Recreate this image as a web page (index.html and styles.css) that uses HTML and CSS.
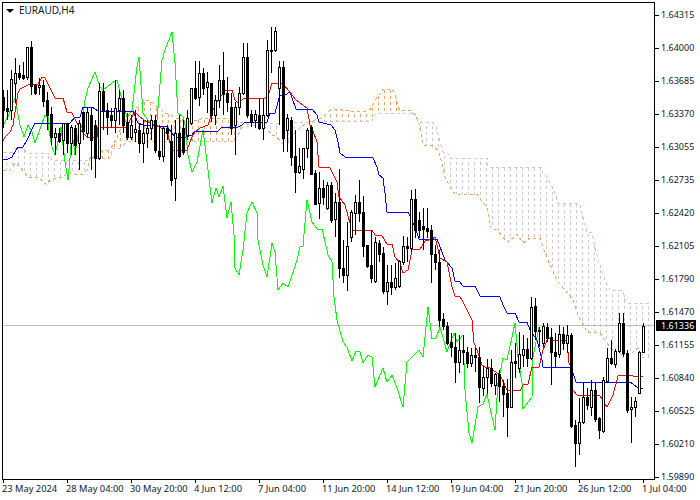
FILE: index.html
```html
<!DOCTYPE html>
<html lang="en">
  <head>
    <meta charset="UTF-8" />
    <title>EURAUD,H4</title>
    <link rel="stylesheet" href="styles.css">
  </head>
  <body>
    <div class="terminal">
      <div class="chart-row">
        <div class="plot">
          <svg id="chart" class="chart-svg" viewBox="3 3 651 476" width="651" height="476"></svg>
          <div class="symbol">
            <svg class="symbol-arrow" viewBox="0 0 8 4" width="8" height="4"><path d="M0 0H8L4 4Z" /></svg>
            <span>EURAUD,H4</span>
          </div>
        </div>
        <div class="price-axis">
          <div class="price">1.64315</div>
          <div class="price">1.64000</div>
          <div class="price">1.63685</div>
          <div class="price">1.63370</div>
          <div class="price">1.63055</div>
          <div class="price">1.62735</div>
          <div class="price">1.62420</div>
          <div class="price">1.62105</div>
          <div class="price">1.61790</div>
          <div class="price">1.61470</div>
          <div class="price">1.61155</div>
          <div class="price">1.60840</div>
          <div class="price">1.60525</div>
          <div class="price">1.60210</div>
          <div class="price">1.59890</div>
          <div class="price-tag">1.61336</div>
        </div>
      </div>
      <div class="time-axis">
        <div class="time">23 May 2024</div>
        <div class="time">28 May 04:00</div>
        <div class="time">30 May 20:00</div>
        <div class="time">4 Jun 12:00</div>
        <div class="time">7 Jun 04:00</div>
        <div class="time">11 Jun 20:00</div>
        <div class="time">14 Jun 12:00</div>
        <div class="time">19 Jun 04:00</div>
        <div class="time">21 Jun 20:00</div>
        <div class="time">26 Jun 12:00</div>
        <div class="time">1 Jul 04:00</div>
      </div>
    </div>
    <script src="chart.js"></script>
  </body>
</html>
```

FILE: styles.css
```css
* {
  margin: 0;
  padding: 0;
  box-sizing: border-box;
}

body,
html {
  width: 100%;
  height: 100%;
  overflow: hidden;
  background-color: white;
  color: #10202c;
  font-family: "Noto Sans", "Liberation Sans", sans-serif;
  font-size: 9px;
}

.terminal {
  width: 700px;
  height: 500px;
  padding: 2px 0 0 2px;
}

.chart-row {
  display: flex;
  height: 478px;
}

.plot {
  position: relative;
  flex: none;
  width: 653px;
  height: 478px;
  border: 1px solid black;
}

.chart-svg {
  display: block;
}

.symbol {
  position: absolute;
  top: 1px;
  left: 3px;
  display: flex;
  align-items: center;
  gap: 5px;
  font-size: 10px;
  line-height: 13px;
}

.symbol-arrow {
  fill: black;
}

/* price scale */
.price-axis {
  position: relative;
  flex: none;
  height: 478px;
  display: flex;
  flex-direction: column;
  gap: 21px;
  padding-top: 7px;
}

.price {
  position: relative;
  height: 12px;
  line-height: 12px;
  padding-left: 6px;
}

.price::before {
  content: "";
  position: absolute;
  top: 6px;
  left: 0;
  width: 4px;
  height: 1px;
  background-color: black;
}

.price-tag {
  position: absolute;
  top: 318px;
  left: 1px;
  width: 40px;
  height: 11px;
  line-height: 11px;
  padding-left: 5px;
  background-color: black;
  color: white;
}

/* time scale */
.time-axis {
  display: flex;
  height: 20px;
}

.time {
  position: relative;
  flex: none;
  width: 64px;
  height: 14px;
  padding-top: 3px;
  line-height: 11px;
  white-space: nowrap;
  font-size: 9.3px;
}

.time::before {
  content: "";
  position: absolute;
  top: 0;
  left: 1px;
  width: 1px;
  height: 3px;
  background-color: black;
}

/* chart drawing */
.chart-svg line,
.chart-svg polyline,
.chart-svg rect {
  shape-rendering: crispEdges;
}

.chart-svg polyline {
  fill: none;
  stroke-width: 1;
}

.bid-line {
  stroke: #c0c0c0;
}

.tenkan {
  stroke: #ff0000;
}

.kijun {
  stroke: #0000ff;
}

.chikou {
  stroke: #00ff00;
}

.senkou-a,
.senkou-b {
  stroke-dasharray: 3 3;
}

.senkou-a,
.hatch-a {
  stroke: #f4a460;
}

.senkou-b {
  stroke: #d8bfd8;
}

.hatch-b {
  stroke: #d2c4d2;
}

.hatch-a,
.hatch-b {
  stroke-dasharray: 3 3;
}

.wick {
  stroke: black;
}

.body-up {
  fill: white;
  stroke: black;
}

.body-down {
  fill: black;
  stroke: black;
}
```

FILE: chart.js
```js
document.addEventListener("DOMContentLoaded", function () {
  const chart = document.getElementById("chart");

  // high, body top, body bottom, low, hollow (pixel rows, one candle every 4px from x=3)
  const candles = [
    [90, 97, 110, 128, 0], [90, 108, 111, 120, 0], [70, 79, 110, 120, 1], [58, 73, 83, 103, 1],
    [65, 73, 77, 80, 0], [62, 75, 78, 80, 0], [47, 47, 77, 80, 1], [41, 47, 86, 95, 0],
    [84, 85, 93, 95, 0], [78, 85, 87, 95, 1], [80, 85, 101, 107, 0], [92, 100, 115, 130, 0],
    [107, 114, 137, 145, 0], [128, 133, 137, 155, 1], [128, 133, 141, 143, 0], [123, 123, 140, 155, 1],
    [123, 123, 143, 153, 0], [125, 127, 143, 155, 1], [125, 128, 145, 155, 0], [120, 123, 143, 170, 1],
    [112, 112, 131, 140, 0], [107, 112, 133, 138, 1], [107, 115, 140, 170, 0], [120, 125, 158, 178, 0],
    [83, 91, 158, 160, 1], [83, 91, 110, 130, 0], [103, 110, 117, 135, 0], [108, 115, 120, 128, 0],
    [80, 108, 120, 133, 1], [90, 98, 110, 125, 1], [90, 98, 125, 133, 0], [113, 122, 137, 140, 0],
    [115, 125, 137, 140, 1], [110, 129, 132, 142, 1], [123, 130, 143, 153, 0], [120, 133, 143, 163, 1],
    [120, 128, 133, 148, 1], [115, 120, 128, 140, 1], [115, 120, 150, 153, 0], [125, 151, 156, 160, 0],
    [127, 128, 156, 162, 1], [125, 128, 133, 140, 0], [125, 141, 180, 186, 0], [120, 133, 178, 201, 1],
    [115, 133, 156, 158, 0], [120, 128, 152, 155, 0], [110, 118, 135, 140, 1], [88, 88, 123, 125, 1],
    [61, 88, 98, 100, 0], [61, 73, 97, 106, 1], [68, 73, 88, 95, 0], [72, 82, 87, 113, 1],
    [83, 83, 115, 122, 0], [95, 100, 115, 125, 1], [65, 80, 100, 108, 1], [52, 80, 94, 115, 0],
    [77, 93, 102, 112, 0], [93, 107, 128, 135, 0], [102, 107, 125, 155, 1], [87, 93, 107, 115, 1],
    [43, 57, 93, 95, 1], [43, 57, 115, 118, 0], [110, 114, 122, 127, 0], [110, 114, 120, 128, 1],
    [98, 115, 128, 130, 0], [98, 115, 128, 140, 1], [40, 50, 115, 117, 1], [27, 50, 51, 73, 1],
    [27, 31, 50, 52, 1], [61, 67, 88, 125, 1], [61, 67, 138, 152, 0], [114, 118, 130, 152, 1],
    [117, 120, 157, 166, 0], [130, 156, 172, 193, 0], [148, 166, 172, 174, 1], [148, 148, 169, 179, 1],
    [128, 130, 148, 158, 1], [125, 127, 174, 175, 0], [170, 173, 204, 204, 0], [172, 188, 203, 219, 1],
    [180, 188, 197, 205, 0], [182, 185, 208, 210, 1], [182, 185, 220, 223, 0], [193, 202, 219, 237, 1],
    [169, 202, 268, 278, 0], [240, 268, 275, 283, 0], [222, 246, 275, 291, 1], [210, 212, 237, 242, 1],
    [195, 202, 213, 235, 1], [180, 202, 213, 222, 0], [196, 212, 246, 257, 0], [245, 245, 266, 268, 0],
    [230, 265, 278, 283, 0], [237, 242, 281, 283, 1], [240, 243, 254, 262, 0], [247, 253, 291, 294, 0],
    [265, 282, 291, 305, 1], [265, 282, 287, 295, 0], [263, 278, 287, 290, 1], [260, 261, 286, 288, 1],
    [236, 246, 262, 265, 1], [237, 246, 248, 262, 0], [190, 199, 248, 252, 1], [189, 199, 230, 238, 0],
    [212, 220, 230, 238, 0], [208, 226, 229, 250, 0], [208, 228, 231, 238, 0], [225, 230, 254, 283, 0],
    [245, 254, 262, 270, 0], [250, 262, 320, 327, 0], [313, 319, 326, 330, 0], [322, 326, 343, 345, 0],
    [333, 342, 347, 357, 0], [333, 347, 362, 383, 0], [335, 350, 362, 373, 1], [335, 350, 352, 365, 0],
    [347, 352, 363, 368, 0], [348, 355, 363, 367, 1], [348, 355, 357, 372, 0], [347, 357, 387, 403, 0],
    [366, 377, 388, 396, 1], [359, 368, 377, 394, 1], [359, 368, 383, 387, 0], [373, 374, 385, 395, 1],
    [370, 374, 386, 402, 0], [380, 386, 394, 417, 0], [379, 393, 407, 437, 0], [350, 362, 407, 408, 1],
    [343, 361, 363, 378, 0], [332, 354, 368, 373, 1], [335, 349, 355, 367, 1], [338, 349, 358, 367, 0],
    [297, 307, 358, 360, 1], [298, 306, 331, 340, 0], [327, 330, 331, 347, 1], [323, 326, 343, 347, 1],
    [323, 327, 338, 342, 0], [328, 337, 352, 385, 0], [333, 352, 356, 367, 0], [325, 334, 354, 358, 1],
    [327, 334, 343, 350, 0], [325, 335, 343, 353, 1], [333, 335, 426, 428, 0], [420, 425, 443, 467, 0],
    [398, 422, 443, 455, 1], [382, 397, 422, 424, 1], [388, 397, 405, 410, 0], [380, 390, 407, 416, 1],
    [382, 390, 419, 422, 0], [417, 418, 430, 439, 0], [377, 380, 431, 433, 1], [348, 358, 381, 383, 1],
    [340, 358, 363, 365, 0], [349, 351, 364, 368, 1], [313, 323, 351, 353, 1], [313, 323, 353, 357, 0],
    [350, 353, 410, 413, 0], [397, 407, 409, 443, 1], [397, 401, 407, 417, 1], [351, 352, 393, 394, 1],
    [323, 326, 352, 353, 1],
  ];

  const tenkan = "3,141 5,137 10,132 13,125 18,93 20,89 30,84 38,84 42,77 45,78 50,88 55,98 63,98 67,112 72,113 78,125 82,132 88,138 97,137 98,127 127,127 131,118 135,112 140,117 147,122 155,125 160,127 168,135 172,150 187,150 192,137 195,132 200,128 208,125 213,110 218,100 222,95 225,90 232,90 235,100 238,103 243,99 248,98 265,98 269,93 272,83 282,83 290,92 296,100 307,108 310,125 312,128 317,142 319,167 330,168 337,182 339,197 345,205 350,223 353,230 372,230 375,235 382,236 387,244 392,244 395,257 400,263 403,273 408,270 412,250 420,249 425,241 432,239 435,237 437,245 440,258 447,262 452,287 455,296 460,297 462,300 472,320 474,343 477,350 482,365 485,367 490,368 500,375 507,390 520,391 523,385 528,384 532,367 539,367 543,350 548,338 552,340 567,341 569,363 572,370 573,390 577,395 600,396 607,407 613,395 618,376 623,375 643,377";

  const kijun = "3,159 8,159 12,157 15,152 18,147 23,147 27,140 33,127 35,123 70,123 75,117 80,117 83,107 92,107 98,111 133,111 138,123 143,125 167,127 172,133 175,137 183,138 192,135 195,131 218,131 222,127 238,127 242,125 245,122 267,122 270,113 275,113 280,95 285,95 290,92 292,98 296,109 312,109 317,115 319,122 331,125 335,130 338,142 340,153 345,157 373,158 377,167 379,175 383,178 385,193 387,212 408,212 415,227 419,239 437,239 445,260 452,268 455,281 460,282 463,286 475,286 480,296 500,297 503,305 507,313 515,313 519,322 527,322 530,330 537,340 542,360 543,367 570,367 573,373 576,382 630,382 637,387 643,389";

  const chikou = "3,125 8,117 15,98 18,115 20,125 24,137 28,125 32,132 35,143 45,115 48,117 48,125 52,147 55,155 61,127 65,162 68,180 70,158 72,132 75,155 78,135 82,125 85,100 88,88 95,72 100,87 103,90 112,83 117,80 122,100 127,117 132,110 137,67 139,57 143,113 150,123 157,120 162,60 165,50 172,32 175,63 178,113 183,117 185,125 188,155 192,172 197,162 202,135 203,130 207,162 210,187 212,203 216,188 219,197 223,186 225,202 227,218 231,202 234,235 235,268 239,275 243,250 247,213 252,202 257,213 258,240 263,265 267,277 272,243 275,252 278,290 283,283 288,287 297,260 300,247 303,246 307,200 312,222 317,229 322,229 327,250 328,255 332,262 334,297 337,320 339,327 343,342 347,347 352,361 356,351 360,352 363,363 368,355 372,357 375,387 383,368 387,382 392,375 397,388 403,407 407,362 419,350 423,357 428,307 432,339 436,338 440,327 447,352 454,333 457,342 463,335 465,390 469,433 472,443 478,407 483,404 487,394 490,408 495,430 498,383 503,358 507,360 515,323 518,357 522,383 523,409 532,397 533,357 539,327";

  const senkouA = "3,170 10,170 12,168 15,163 20,167 25,173 28,177 37,177 40,178 43,182 47,185 50,180 58,178 63,177 68,172 73,174 83,174 87,170 90,157 97,158 103,150 110,150 113,145 117,138 120,130 125,122 132,112 140,105 147,100 153,103 163,112 170,115 175,118 190,122 205,118 228,118 240,122 250,125 265,127 272,135 275,135 282,143 288,143 293,135 298,130 305,124 315,120 322,118 330,110 340,109 350,111 368,111 372,108 375,100 380,94 383,89 392,89 395,93 398,107 400,110 412,110 413,113 418,120 421,133 423,145 432,146 438,150 442,163 445,177 450,187 455,194 478,195 482,202 487,207 489,220 491,228 497,230 507,242 513,238 517,234 523,243 530,238 540,238 543,247 550,265 558,282 565,290 573,300 578,315 587,332 600,333 607,343 613,352 625,355 632,353 638,348 643,358 649,357";

  const senkouB = "3,152 12,152 15,148 23,148 27,153 48,153 52,160 88,160 90,158 110,158 113,148 120,148 127,142 133,141 235,141 242,128 260,124 280,123 350,121 372,121 373,117 377,113 415,113 418,122 433,122 436,127 439,138 443,152 447,153 451,158 487,158 488,167 540,167 543,173 547,177 550,183 554,190 558,203 580,204 583,217 587,232 592,233 595,248 600,265 605,280 610,290 623,290 625,300 627,303 650,303";

  function addEl(tag, attrs) {
    const el = document.createElementNS("http://www.w3.org/2000/svg", tag);
    Object.keys(attrs).forEach((name) => el.setAttribute(name, attrs[name]));
    chart.appendChild(el);
    return el;
  }

  function parsePoints(text) {
    return text.split(" ").map((pair) => pair.split(",").map(Number));
  }

  // y of a polyline at column x
  function yAt(points, x) {
    for (let i = 1; i < points.length; i++) {
      if (x <= points[i][0]) {
        const [x0, y0] = points[i - 1];
        const [x1, y1] = points[i];
        return y0 + ((y1 - y0) * (x - x0)) / (x1 - x0 || 1);
      }
    }
    return points[points.length - 1][1];
  }

  // Cloud hatching between the two spans, dashes kept on a common row grid
  const spanA = parsePoints(senkouA);
  const spanB = parsePoints(senkouB);
  for (let x = 6; x < 650; x += 6) {
    const a = Math.round(yAt(spanA, x));
    const b = Math.round(yAt(spanB, x));
    const top = Math.min(a, b);
    addEl("line", {
      class: a < b ? "hatch-a" : "hatch-b",
      x1: x + 0.5,
      x2: x + 0.5,
      y1: top,
      y2: Math.max(a, b),
      "stroke-dashoffset": top % 6,
    });
  }

  addEl("polyline", { class: "senkou-a", points: senkouA });
  addEl("polyline", { class: "senkou-b", points: senkouB });
  addEl("line", { class: "bid-line", x1: 3, x2: 654, y1: 325.5, y2: 325.5 });
  addEl("polyline", { class: "chikou", points: chikou });
  addEl("polyline", { class: "kijun", points: kijun });
  addEl("polyline", { class: "tenkan", points: tenkan });

  candles.forEach((candle, index) => {
    const [high, top, bottom, low, hollow] = candle;
    const x = 3 + index * 4;
    addEl("line", { class: "wick", x1: x + 0.5, x2: x + 0.5, y1: high, y2: low });
    addEl("rect", {
      class: hollow ? "body-up" : "body-down",
      x: x - 0.5,
      y: top + 0.5,
      width: 2,
      height: Math.max(bottom - top, 1),
    });
  });
});
```
